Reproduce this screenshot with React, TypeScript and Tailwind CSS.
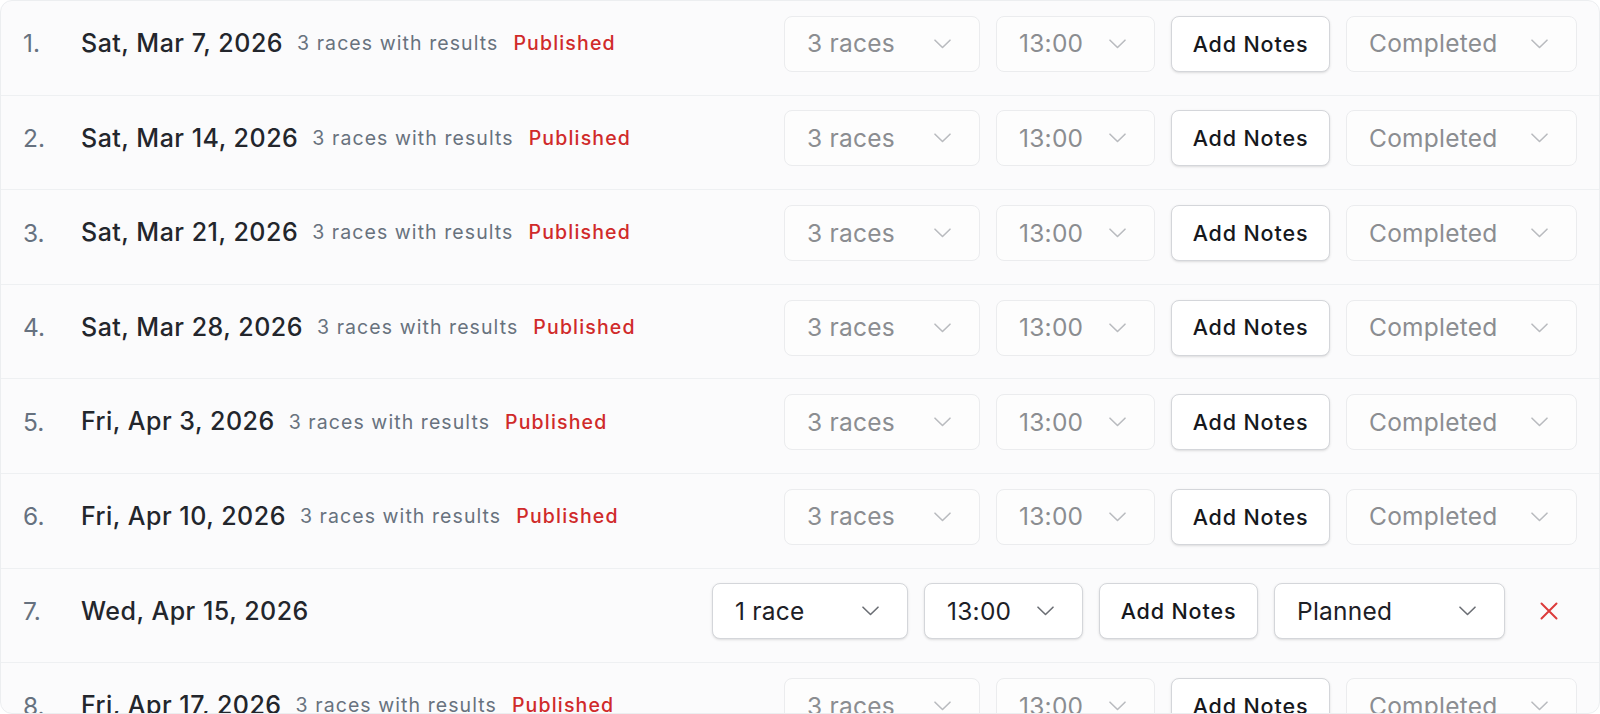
import React from "react";

type Race = {
  n: number;
  date: string;
  races: string;
  time: string;
  status: string;
  published: boolean;
};

const rows: Race[] = [
  { n: 1, date: "Sat, Mar 7, 2026", races: "3 races", time: "13:00", status: "Completed", published: true },
  { n: 2, date: "Sat, Mar 14, 2026", races: "3 races", time: "13:00", status: "Completed", published: true },
  { n: 3, date: "Sat, Mar 21, 2026", races: "3 races", time: "13:00", status: "Completed", published: true },
  { n: 4, date: "Sat, Mar 28, 2026", races: "3 races", time: "13:00", status: "Completed", published: true },
  { n: 5, date: "Fri, Apr 3, 2026", races: "3 races", time: "13:00", status: "Completed", published: true },
  { n: 6, date: "Fri, Apr 10, 2026", races: "3 races", time: "13:00", status: "Completed", published: true },
  { n: 7, date: "Wed, Apr 15, 2026", races: "1 race", time: "13:00", status: "Planned", published: false },
  { n: 8, date: "Fri, Apr 17, 2026", races: "3 races", time: "13:00", status: "Completed", published: true },
];

const Chevron = ({ className }: { className: string }) => (
  <svg width="17" height="10" viewBox="0 0 17 10" fill="none" className={className}>
    <path d="M1 1.2l7.5 7.3L16 1.2" stroke="currentColor" strokeWidth="1.6" strokeLinecap="round" strokeLinejoin="round" />
  </svg>
);

type SelectProps = {
  value: string;
  width: string;
  disabled: boolean;
};

const FakeSelect = ({ value, width, disabled }: SelectProps) => (
  <div
    className={`${width} h-[56px] flex items-center justify-between pl-[22px] pr-[28px] rounded-lg border text-[24.5px] tracking-[0.01em] ${
      disabled
        ? "border-[#ebecee] bg-[#fdfdfd] text-[#8b8d91]"
        : "border-[#d4d6da] bg-white text-[#1d2026] shadow-sm"
    }`}
  >
    <span>{value}</span>
    <Chevron className={disabled ? "text-[#b9bbbf]" : "text-[#6b6e74]"} />
  </div>
);

const RaceRow = ({ row }: { row: Race }) => {
  const locked = row.published;
  return (
    <div className="flex items-center h-[94.6px] pb-[8px] pl-[22px] pr-[22px] border-b border-[#eef0f2]">
      <div className="w-[58px] text-[24.5px] text-[#66717f]">{row.n}.</div>
      <div className="text-[25px] font-medium tracking-[0.02em] text-[#23262c]">{row.date}</div>
      {locked && (
        <>
          <span className="ml-[14px] text-[19.5px] tracking-[0.055em] text-[#68727e]">3 races with results</span>
          <span className="ml-[15px] text-[19.5px] font-medium tracking-[0.06em] text-[#d02a2a]">Published</span>
        </>
      )}
      <div className="ml-auto flex items-center gap-4">
        <FakeSelect value={row.races} width="w-[196px]" disabled={locked} />
        <FakeSelect value={row.time} width="w-[159px]" disabled={locked} />
        <button className="w-[159px] h-[56px] rounded-lg border border-[#d4d6da] bg-white shadow-sm text-[21.5px] font-medium text-[#16181d] tracking-[0.04em]">
          Add Notes
        </button>
        <FakeSelect value={row.status} width="w-[231px]" disabled={locked} />
        {!locked && (
          <button className="w-[56px] h-[56px] flex items-center justify-center text-[#dc3b3b]">
            <svg width="20" height="20" viewBox="0 0 20 20" fill="none">
              <path d="M2.5 2.5l15 15M17.5 2.5l-15 15" stroke="currentColor" strokeWidth="2" strokeLinecap="round" />
            </svg>
          </button>
        )}
      </div>
    </div>
  );
};

export default function App() {
  return (
    <div className="w-[1600px] h-[714px] bg-white font-[Inter,sans-serif]">
      <div className="h-full overflow-hidden rounded-xl border border-[#eceef0] bg-[#fbfbfc]">
        {rows.map((row) => (
          <RaceRow key={row.n} row={row} />
        ))}
      </div>
    </div>
  );
}
